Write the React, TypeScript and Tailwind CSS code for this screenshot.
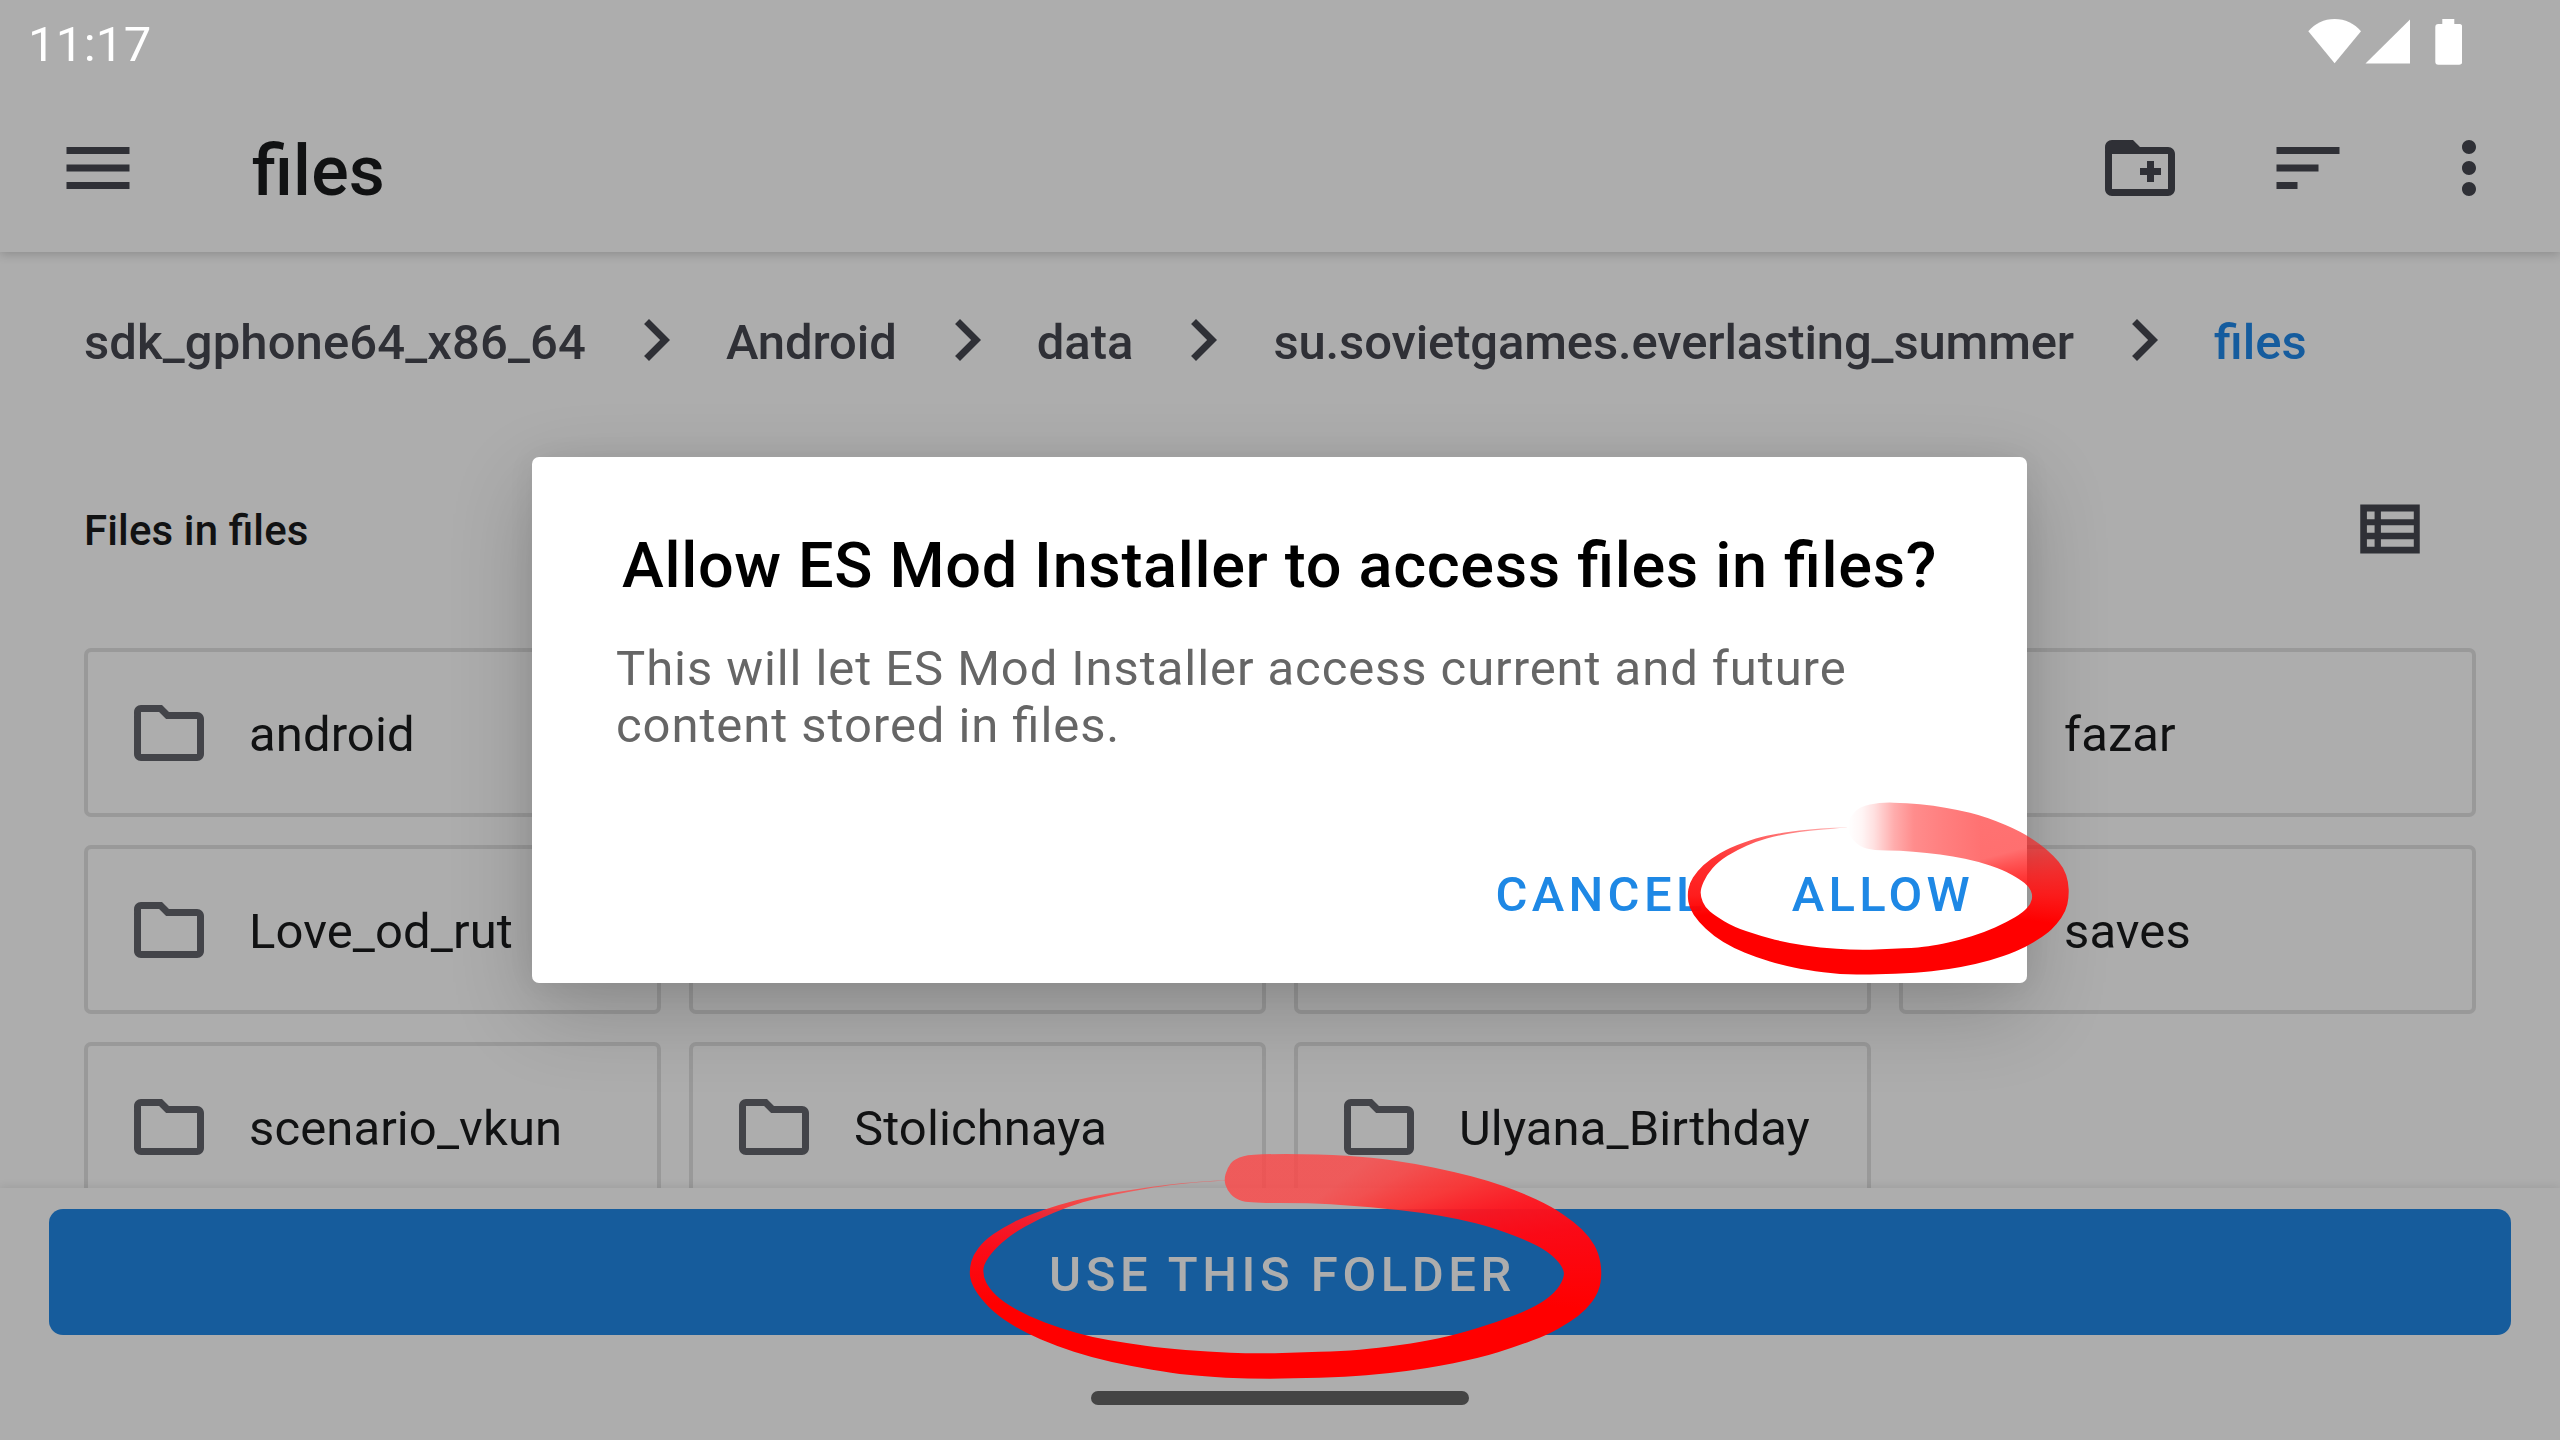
import { Fragment } from "react";

const FOLDER =
  "M9.17 6l2 2H20v10H4V6h5.17M10 4H4c-1.1 0-1.99.9-1.99 2L2 18c0 1.1.9 2 2 2h16c1.1 0 2-.9 2-2V8c0-1.1-.9-2-2-2h-8l-2-2z";

function Icon({ d, className }: { d: string; className?: string }) {
  return (
    <svg viewBox="0 0 24 24" fill="currentColor" className={"size-[84px] shrink-0 " + (className ?? "")}>
      <path fillRule="evenodd" d={d} />
    </svg>
  );
}

function StatusBar() {
  return (
    <div className="flex h-[84px] items-start justify-between pl-[28px] pr-[98px] text-white">
      <span className="text-[49px] leading-[89px] tracking-[0.3px]">11:17</span>
      <svg viewBox="0 0 154 46" className="mt-[19px] h-[46px] w-[154px]" fill="currentColor">
        <path d="M0.3 12.3C7 4.3 16 0 26.6 0S46.300 4.300 53 12.300L26.600 44.300z" />
        <path d="M57.500 44.500L102 0.500V44.500z" />
        <path d="M134.300 0h12v5h5a3 3 0 0 1 3 3v34.700a3 3 0 0 1-3 3h-21a3 3 0 0 1-3-3V8a3 3 0 0 1 3-3h4z" />
      </svg>
    </div>
  );
}

function Toolbar() {
  return (
    <div className="flex h-[168px] items-center text-[#2f3036]">
      <Icon className="ml-[56px]" d="M3 18h18v-2H3v2zm0-5h18v-2H3v2zm0-7v2h18V6H3z" />
      <h1 className="ml-[112px] flex-1 pt-[6px] text-[70px] font-medium leading-none tracking-[0.2px] text-[#111213]">files</h1>
      <Icon
        className="mr-[84px]"
        d="M20 6h-8l-2-2H4c-1.110 0-1.990.89-1.990 2L2 18c0 1.110.89 2 2 2h16c1.110 0 2-.89 2-2V8c0-1.110-.89-2-2-2zm0 12H4V8h16v10zm-8-4h2v2h2v-2h2v-2h-2v-2h-2v2h-2z"
      />
      <Icon className="mr-[77px]" d="M3 18h6v-2H3v2zM3 6v2h18V6H3zm0 7h12v-2H3v2z" />
      <Icon
        className="mr-[49px]"
        d="M12 8c1.100 0 2-.9 2-2s-.9-2-2-2-2 .9-2 2 .9 2 2 2zm0 2c-1.100 0-2 .9-2 2s.9 2 2 2 2-.9 2-2-.9-2-2-2zm0 6c-1.100 0-2 .9-2 2s.9 2 2 2 2-.9 2-2-.9-2-2-2z"
      />
    </div>
  );
}

const CRUMBS = [
  { name: "sdk_gphone64_x86_64", style: "tracking-[0.11px]" },
  { name: "Android", style: "tracking-[-0.12px]" },
  { name: "data", style: "" },
  { name: "su.sovietgames.everlasting_summer", style: "tracking-[-0.13px]" },
  { name: "files", style: "text-[#155c9e]" },
];

function Breadcrumbs() {
  return (
    <nav className="flex h-[177px] items-center gap-[28px] pl-[84px] pt-[4px] text-[49px] font-medium text-[#2f3036]">
      {CRUMBS.map((c, i) => (
        <Fragment key={c.name}>
          {i > 0 && <Icon className="-mt-[6px]" d="M10 6L8.590 7.410 13.170 12l-4.580 4.590L10 18l6-6z" />}
          <span className={c.style}>{c.name}</span>
        </Fragment>
      ))}
    </nav>
  );
}

const FOLDERS = ["android", "", "", "fazar", "Love_od_rut", "", "", "saves", "scenario_vkun", "Stolichnaya", "Ulyana_Birthday"];

function FolderGrid() {
  return (
    <div className="grid grid-cols-[577px_577px_577px_577px] gap-x-[28px] gap-y-[28px] pl-[84px]">
      {FOLDERS.map((name, i) => (
        <div key={i} className="flex h-[169px] items-center rounded-[7px] border-4 border-[#999999] pl-[39px]">
          <Icon className="text-[#434449]" d={FOLDER} />
          <span className="ml-[38px] pt-[4px] text-[49px] leading-none tracking-[0.1px] text-[#111213]">{name}</span>
        </div>
      ))}
    </div>
  );
}

function BottomBar() {
  return (
    <div className="relative flex h-[252px] flex-col items-center bg-[#adadad] px-[49px] pt-[21px] shadow-[0_-2px_8px_rgba(0,0,0,0.08)]">
      <button className="h-[126px] w-full rounded-[14px] bg-[#165c9c] pl-[5px] pt-[5px] text-[49px] font-medium tracking-[0.093em] text-[#adadad]">
        USE THIS FOLDER
      </button>
      <div className="mt-[56px] h-[14px] w-[378px] rounded-[7px] bg-[#444444]" />
    </div>
  );
}

function Dialog() {
  return (
    <div className="absolute inset-0 flex justify-center pr-[1px] pt-[457px]">
      <div className="flex h-[526px] w-[1495px] flex-col rounded-[7px] bg-white shadow-[0_28px_84px_rgba(0,0,0,0.2),0_0_28px_rgba(0,0,0,0.06)]">
        <h2 className="mt-[72px] whitespace-nowrap pl-[90px] text-[63px] font-medium leading-[74px] tracking-[0.0106em] text-black">
          Allow ES Mod Installer to access files in files?
        </h2>
        <p className="mt-[37px] whitespace-nowrap pl-[84px] text-[49px] leading-[57px] tracking-[0.0188em] text-[#666666]">
          This will let ES Mod Installer access current and future
          <br />
          content stored in files.
        </p>
        <div className="mt-[103px] flex justify-end gap-[85px] pr-[53px] text-[49px] font-medium leading-[76px] tracking-[0.088em] text-[#1e88e5]">
          <span>CANCEL</span>
          <span>ALLOW</span>
        </div>
      </div>
    </div>
  );
}

type Point = [number, number];

/* Closed smooth outline through the given points (midpoint quadratic curves). */
function smooth(points: Point[]): string {
  const mid = (a: Point, b: Point) => `${(a[0] + b[0]) / 2} ${(a[1] + b[1]) / 2}`;
  const n = points.length;
  let d = `M${mid(points[n - 1], points[0])}`;
  points.forEach((p, i) => {
    d += `Q${p[0]} ${p[1]} ${mid(p, points[(i + 1) % n])}`;
  });
  return d + "Z";
}

const scale = (pts: number[][], sx: number, sy: number): Point[] => pts.map(([x, y]) => [x * sx, y * sy]);

const ALLOW_RING = smooth(
  scale(
    [
      [660, 67], [740, 69], [820, 77], [900, 91], [960, 106], [1010, 124], [1060, 145], [1100, 166], [1140, 192], [1180, 226],
      [1212, 265], [1225, 305], [1227, 350], [1217, 395], [1190, 433], [1160, 462], [1100, 500], [1035, 528], [945, 553], [860, 569],
      [770, 579], [640, 584], [540, 583], [440, 570], [370, 556], [290, 533], [220, 504], [160, 468], [115, 425], [88, 385],
      [82, 345], [88, 310], [110, 275], [150, 237], [210, 202], [290, 174], [350, 161], [420, 151], [480, 146], [562, 141],
      [562, 143], [480, 149], [420, 156], [350, 167], [290, 184], [230, 210], [175, 245], [140, 285], [122, 325], [122, 350],
      [135, 382], [165, 407], [220, 440], [300, 468], [390, 490], [480, 503], [580, 510], [680, 508], [780, 502], [830, 495],
      [900, 480], [970, 458], [1040, 427], [1090, 397], [1113, 370], [1118, 345], [1107, 320], [1080, 298], [1030, 270], [950, 243],
      [880, 229], [800, 218], [720, 212], [640, 211], [600, 200], [570, 170], [563, 140], [570, 110], [600, 80],
    ],
    1 / 3,
    1 / 3,
  ),
);

const FOLDER_RING = smooth(
  scale(
    [
      [700, 72], [850, 72], [970, 83], [1060, 100], [1150, 125], [1230, 153], [1300, 186], [1370, 230], [1420, 275], [1455, 320],
      [1476, 370], [1483, 430], [1476, 487], [1447, 540], [1410, 577], [1360, 615], [1290, 650], [1210, 684], [1090, 715], [1000, 731],
      [910, 741], [790, 746], [690, 746], [590, 740], [520, 729], [430, 709], [340, 683], [260, 648], [190, 608], [130, 558],
      [90, 505], [68, 455], [66, 415], [74, 375], [98, 333], [140, 293], [190, 260], [270, 222], [340, 199], [420, 181],
      [500, 165], [560, 157], [638, 150], [638, 152], [560, 159], [500, 168], [420, 186], [350, 205], [290, 229], [220, 267],
      [160, 313], [120, 360], [97, 405], [97, 440], [110, 475], [140, 515], [200, 560], [270, 595], [340, 622], [420, 640],
      [500, 655], [600, 665], [700, 671], [800, 668], [900, 663], [980, 655], [1080, 635], [1155, 614], [1250, 575], [1330, 533],
      [1377, 490], [1398, 445], [1397, 415], [1372, 375], [1330, 340], [1240, 293], [1160, 266], [1080, 248], [1010, 238], [920, 226],
      [830, 219], [690, 219], [660, 205], [643, 180], [636, 150], [643, 115], [660, 85],
    ],
    700 / 1568,
    1 / 3,
  ),
);

function Rings() {
  return (
    <>
      <div className="absolute left-[1660px] top-[780px] h-[240px] w-[440px]" style={{ clipPath: `path("${ALLOW_RING}")` }}>
        <div className="absolute left-[188px] top-0 h-[115px] w-[132px] bg-[linear-gradient(90deg,rgba(255,0,0,0)_0px,rgba(255,0,0,0.04)_14px,rgba(255,0,0,0.12)_26px,rgba(255,0,0,0.32)_46px,rgba(255,5,5,0.46)_66px,rgba(255,10,10,0.52)_95px,rgba(255,20,20,0.6)_132px)]" />
        <div className="absolute inset-0 [clip-path:polygon(0_0,188px_0,188px_115px,320px_115px,320px_0,440px_0,440px_240px,0_240px)] bg-[conic-gradient(at_188px_115px,rgba(255,20,20,0.6)_60deg,rgba(255,20,20,0.61)_75deg,rgba(255,20,20,0.72)_79deg,rgba(255,24,24,0.86)_84deg,rgba(255,20,20,0.95)_90deg,#ff0000_98deg,#ff0000_262deg,rgba(255,10,10,0.92)_270deg,rgba(255,20,20,0.87)_285deg,rgba(255,20,20,0.72)_297deg,rgba(255,20,20,0.6)_312deg,rgba(255,20,20,0.4)_337deg,rgba(255,20,20,0.2)_360deg)]" />
      </div>
      <div
        className="absolute left-[940px] top-[1130px] h-[260px] w-[700px] bg-[conic-gradient(at_284px_142px,rgba(255,70,70,0.8)_0deg,rgba(255,70,70,0.8)_52deg,rgba(255,62,62,0.84)_61deg,rgba(255,45,45,0.9)_70deg,rgba(255,20,30,0.95)_77deg,rgba(255,8,20,0.98)_83deg,#ff0000_96deg,#ff0000_262deg,rgba(255,10,20,0.98)_275deg,rgba(255,25,40,0.94)_284deg,rgba(255,50,50,0.88)_292deg,rgba(255,70,70,0.8)_307deg,rgba(255,70,70,0.7)_325deg,rgba(255,70,70,0.5)_359deg,rgba(255,70,70,0.8)_360deg)]"
        style={{ clipPath: `path("${FOLDER_RING}")` }}
      />
    </>
  );
}

export default function App() {
  return (
    <div className="relative h-[1440px] w-[2560px] overflow-hidden bg-[#adadad] font-[Roboto,sans-serif] [font-feature-settings:'liga'_1]">
      <div className="flex h-full flex-col">
        <header className="shadow-[0_2px_10px_rgba(0,0,0,0.2)]">
          <StatusBar />
          <Toolbar />
        </header>
        <main className="min-h-0 flex-1 overflow-hidden">
          <Breadcrumbs />
          <div className="flex h-[219px] items-start justify-between pl-[84px] pr-[128px]">
            <span className="mt-[73px] text-[42px] font-medium leading-[58px] tracking-[0.12px] text-[#111213]">Files in files</span>
            <Icon
              className="mt-[58px] text-[#2f3036]"
              d="M3.500 5v14h17V5zM5.400 7h2.200v2.200H5.400zM9.400 7h9.400v2.200H9.400zM5.400 10.900h2.200v2.200H5.400zM9.400 10.900h9.400v2.200H9.400zM5.400 14.900h2.200v2.200H5.400zM9.400 14.900h9.400v2.200H9.400z"
            />
          </div>
          <FolderGrid />
        </main>
        <BottomBar />
      </div>
      <Dialog />
      <Rings />
    </div>
  );
}
